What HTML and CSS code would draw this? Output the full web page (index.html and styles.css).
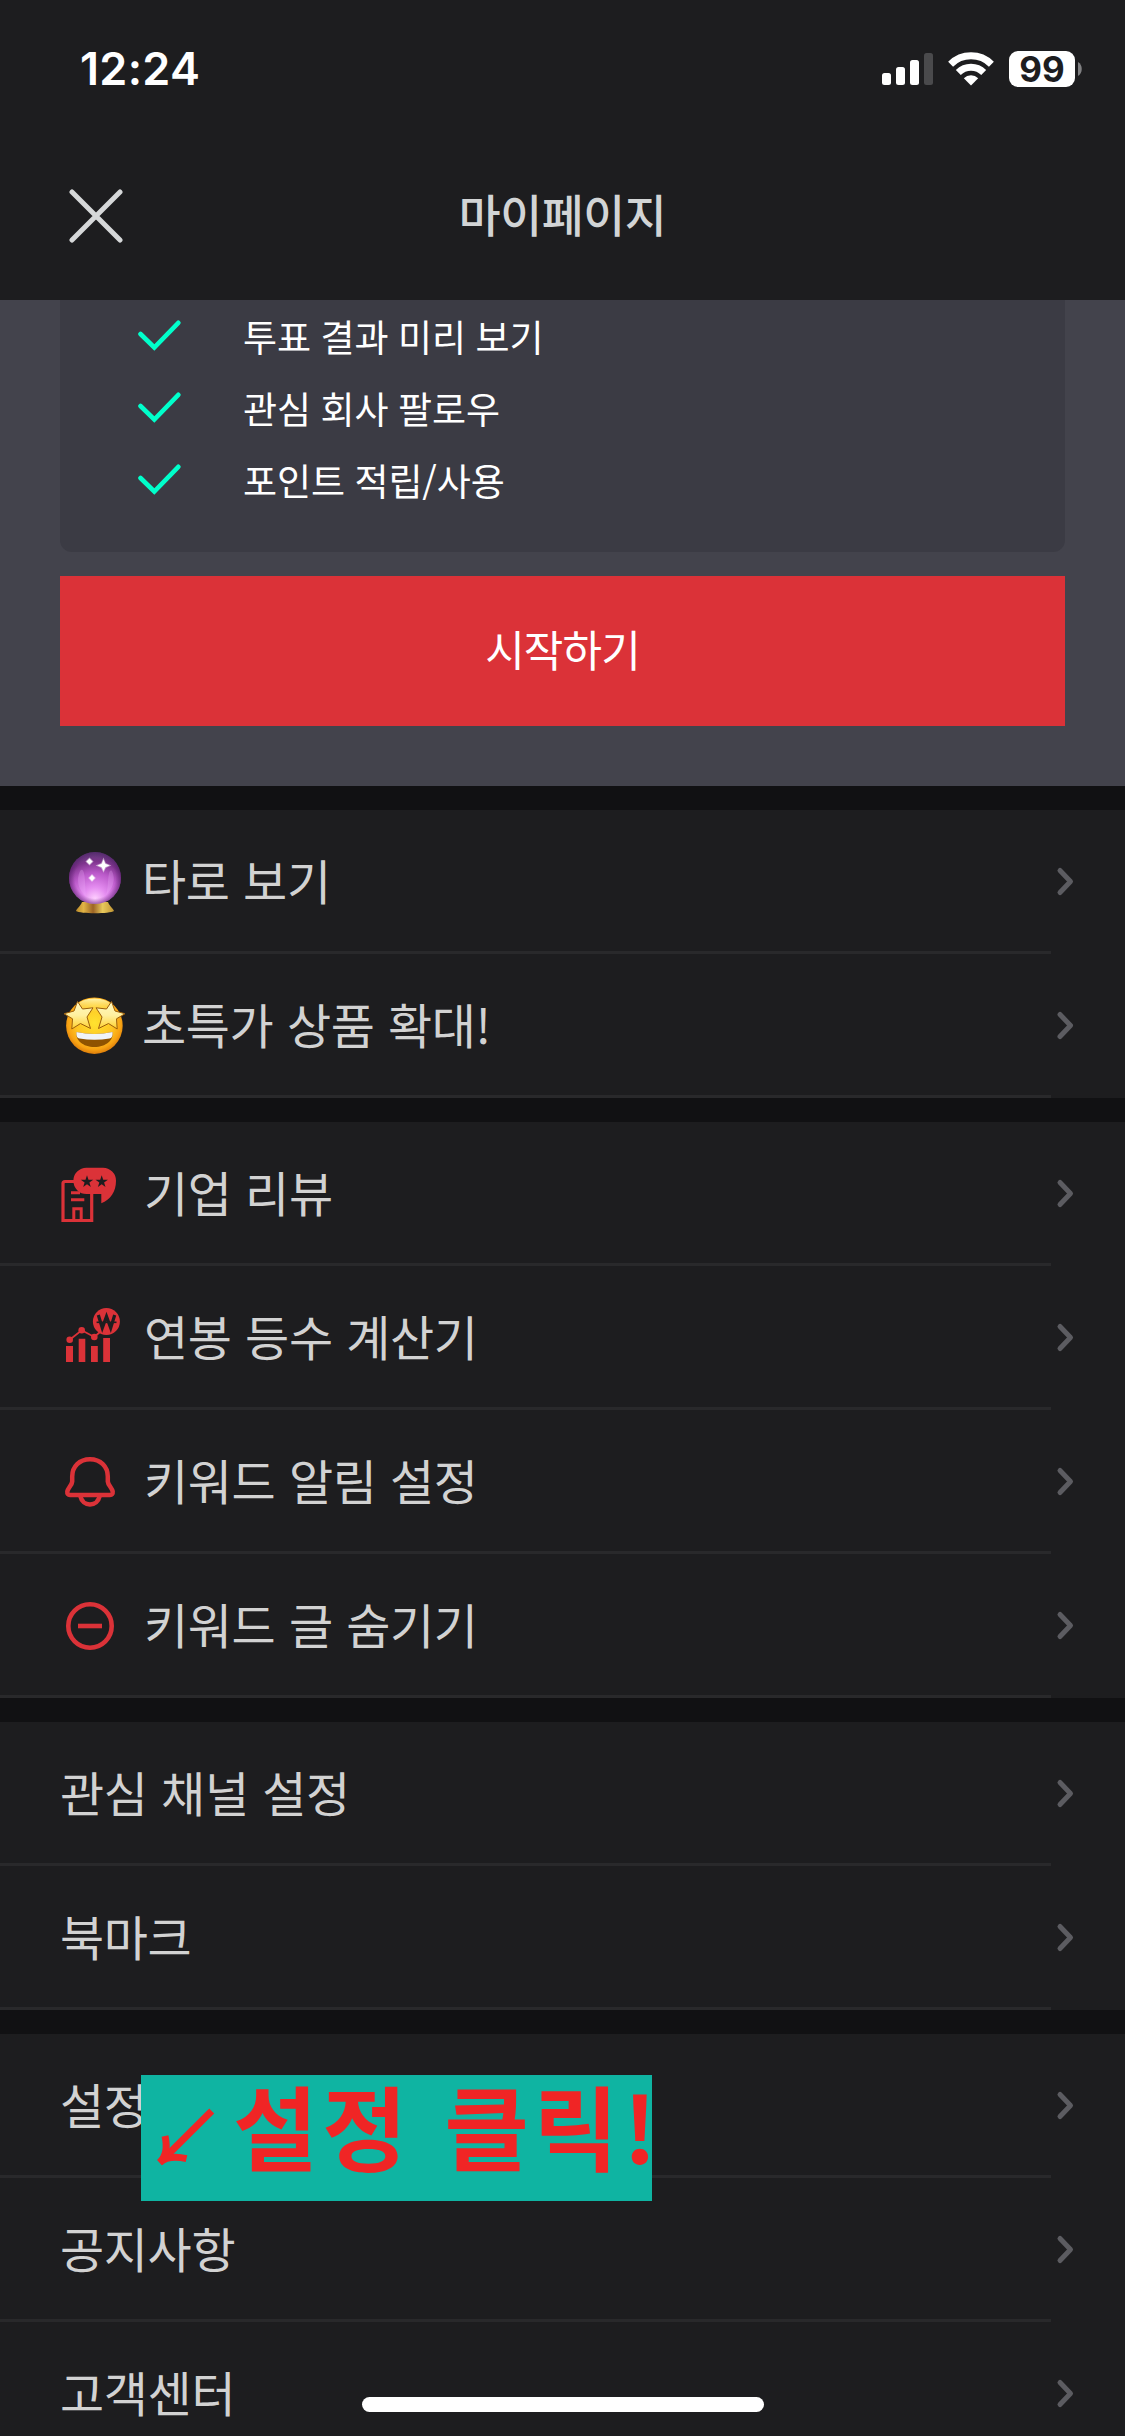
FILE: index.html
```html
<!DOCTYPE html>
<html lang="ko">
<head>
<meta charset="utf-8">
<title>마이페이지</title>
<link rel="stylesheet" href="styles.css">
</head>
<body>
<svg class="defs" width="0" height="0" aria-hidden="true">
  <defs>
    <symbol id="chevron" viewBox="0 0 20 32"><path d="M4 4.500 14.500 15.500 4 26.500" fill="none" stroke="#5c5c61" stroke-width="5" stroke-linecap="round" stroke-linejoin="round"/></symbol>
    <symbol id="check" viewBox="0 0 44 32"><path d="M2.500 14 16.300 27.500 40.300 2.800" fill="none" stroke="#00ffcb" stroke-width="4.600" stroke-linecap="round"/></symbol>
  </defs>
</svg>
<div class="screen">
  <header class="top">
    <div class="status">
      <span class="time">12:24</span>
      <div class="indicators">
        <svg class="signal" viewBox="0 0 51 32"><g fill="#fff"><rect y="20" width="9" height="12" rx="2.500"/><rect x="14" y="14" width="9" height="18" rx="2.500"/><rect x="28" y="7" width="9" height="25" rx="2.500"/></g><rect x="42" width="9" height="32" rx="2.500" fill="#4a4a4c"/></svg>
        <svg class="wifi" viewBox="0 0 46 34"><g fill="none" stroke="#fff" stroke-width="7"><path d="M2.600 12.200A29 29 0 0 1 43.400 12.200"/><path d="M10.300 20.400A18 18 0 0 1 35.700 20.400"/></g><path d="M23 33.500 15.800 26.200A10.400 10.400 0 0 1 30.200 26.200Z" fill="#fff"/></svg>
        <div class="battery"><span>99</span></div>
        <svg class="nub" viewBox="0 0 4 14"><path d="M0 0C5 2.500 5 11.500 0 14Z" fill="#808082"/></svg>
      </div>
    </div>
    <div class="nav">
      <svg class="close" viewBox="0 0 54 54"><path d="M3 3 51 51M51 3 3 51" stroke="#d6d8d9" stroke-width="5" stroke-linecap="round"/></svg>
      <h1>마이페이지</h1>
    </div>
  </header>

  <section class="promo">
    <ul class="benefits">
      <li><svg class="check"><use href="#check"/></svg><span>투표 결과 미리 보기</span></li>
      <li><svg class="check"><use href="#check"/></svg><span>관심 회사 팔로우</span></li>
      <li><svg class="check"><use href="#check"/></svg><span>포인트 적립/사용</span></li>
    </ul>
    <button class="start">시작하기</button>
  </section>

  <section class="group">
    <div class="row emoji">
      <svg class="icon" viewBox="0 0 84 84">
        <defs>
          <radialGradient id="ball" cx=".5" cy=".9" r=".9"><stop offset="0" stop-color="#ffd0ff"/><stop offset=".25" stop-color="#e48cf0"/><stop offset=".55" stop-color="#bb5aca"/><stop offset=".8" stop-color="#7d338c"/><stop offset="1" stop-color="#5f407a"/></radialGradient>
          <linearGradient id="base"><stop offset="0" stop-color="#b98a2a"/><stop offset=".2" stop-color="#e2b445"/><stop offset=".45" stop-color="#9c6424"/><stop offset=".7" stop-color="#e8c95c"/><stop offset="1" stop-color="#c09433"/></linearGradient>
          <radialGradient id="ballEdge"><stop offset=".78" stop-color="#4b1460" stop-opacity="0"/><stop offset="1" stop-color="#4b1460" stop-opacity=".5"/></radialGradient>
        </defs>
        <path d="M22 62H48C50 67 53 68 54 71C50 74 20 74 16 71C17 68 20 67 22 62Z" fill="url(#base)"/>
        <circle cx="35" cy="38" r="26" fill="url(#ball)"/>
        <circle cx="35" cy="38" r="26" fill="url(#ballEdge)"/>
        <path d="M20 31C26 24 25 51 26 56C18 51 16 39 20 31ZM52 31C47 27 49 50 46 55C53 49 56 39 52 31Z" fill="#f2b8ff" opacity=".25"/>
        <path d="M43.500 19.500 45.300 23.700 49.500 25.500 45.300 27.300 43.500 31 41.700 27.300 37.500 25.500 41.700 23.700ZM29.500 18.500 32.500 21.500 29.500 24.500 26.500 21.500ZM32 35 34.800 38 32 41 29.200 38Z" fill="#fff" stroke="#fff" stroke-opacity=".5" stroke-width="1.500"/>
      </svg>
      <span class="label">타로 보기</span><svg class="chevron"><use href="#chevron"/></svg>
    </div>
    <div class="row emoji">
      <svg class="icon" viewBox="0 0 84 84">
        <defs>
          <radialGradient id="face" cx=".5" cy=".45" r=".55"><stop offset="0" stop-color="#ffe22f"/><stop offset=".6" stop-color="#fec423"/><stop offset=".85" stop-color="#f8a313"/><stop offset="1" stop-color="#dd7d0b"/></radialGradient>
          <linearGradient id="star" x2="0" y2="1"><stop offset="0" stop-color="#fff9c2"/><stop offset=".5" stop-color="#fff0a0"/><stop offset="1" stop-color="#ffd02c"/></linearGradient>
          <linearGradient id="shine" x2="0" y2="1"><stop offset="0" stop-color="#fff6ae"/><stop offset="1" stop-color="#ffe052" stop-opacity=".2"/></linearGradient>
        </defs>
        <circle cx="34.400" cy="41.700" r="28.300" fill="url(#face)"/>
        <ellipse cx="34.400" cy="21" rx="16" ry="6.500" fill="url(#shine)"/>
        <path d="M16.500 48Q34.500 52 52.500 48C54 56 46 63 34.500 63S15 56 16.500 48Z" fill="#8f5300"/>
        <path d="M16.500 48Q34.500 52 52.500 48C53 52.500 51.500 54 49.500 54.500Q34.500 57 19.500 54.500C17.500 54 16 52.500 16.500 48Z" fill="#f0f4f8"/>
        <g fill="url(#star)" stroke="#9c5e0c" stroke-width="1" stroke-linejoin="round">
          <path d="M17.500 17.500 22.500 25 33 23.800 27 33 30.500 44.500 20.500 39.500 11.800 45 12.500 34.800 4 29.700 14 27Z"/>
          <path d="M51.500 17.500 46.500 25 36 23.800 42 33 38.500 44.500 48.500 39.500 57.200 45 56.500 34.800 65 29.700 55 27Z"/>
        </g>
      </svg>
      <span class="label">초특가 상품 확대!</span><svg class="chevron"><use href="#chevron"/></svg>
    </div>
  </section>

  <section class="group">
    <div class="row">
      <svg class="icon" viewBox="0 0 84 84">
        <path d="M15 29.500H5Q3 29.500 3 31.500V68.500H31.700V40" fill="none" stroke="#db3238" stroke-width="3.200"/>
        <path d="M11 40.700H20M11 47.700H24.300M13.800 68V56.700H21.200V68" fill="none" stroke="#db3238" stroke-width="3"/>
        <path d="M26.500 15.700H43A13 13 0 0 1 56 28.700C56 40 50.500 47.500 41.300 51.200V42H26.500A13.100 13.100 0 0 1 26.500 15.700Z" fill="#db3238"/>
        <g fill="#1d1d1f"><path id="s" d="M27 23.200 28.500 27.700H33.200L29.400 30.500 30.800 35 27 32.300 23.200 35 24.600 30.500 20.800 27.700H25.500Z"/><use href="#s" x="14.700"/></g>
      </svg>
      <span class="label">기업 리뷰</span><svg class="chevron"><use href="#chevron"/></svg>
    </div>
    <div class="row">
      <svg class="icon" viewBox="0 0 84 84">
        <g fill="#db3238"><path d="M6 50H13V66H6ZM18.700 42.700H25.300V66H18.700ZM31 50H37.800V66H31ZM43.200 42H50V66H43.200Z"/><circle cx="9.700" cy="43.700" r="3.300"/><circle cx="21.700" cy="34.200" r="3.300"/><circle cx="34.300" cy="41" r="3.300"/><circle cx="46.400" cy="25.500" r="13.500"/></g>
        <path d="M9.700 43.700 21.700 34.200 34.300 41 40 36" fill="none" stroke="#db3238" stroke-width="1.800"/>
        <path d="M38.300 19 42.300 32 46.500 20.500 50.700 32 54.700 19" fill="none" stroke="#1d1d1f" stroke-width="3.200"/><path d="M36.600 26.300H56.500" stroke="#1d1d1f" stroke-width="1.600"/>
      </svg>
      <span class="label">연봉 등수 계산기</span><svg class="chevron"><use href="#chevron"/></svg>
    </div>
    <div class="row">
      <svg class="icon" viewBox="0 0 84 84"><g fill="none" stroke="#db3238" stroke-width="4.500" stroke-linejoin="round"><path d="M30 19.200C19.500 19.200 12.200 26.500 12.200 36.500V41.500C12 45 8 48 7.300 51.500Q7 54.900 10 54.900H50Q53 54.900 52.700 51.500C52 48 48 45 47.800 41.500V36.500C47.800 26.500 40.500 19.200 30 19.200Z"/><path d="M20.300 56C21.500 61.500 25.500 64.500 30 64.500S38.500 61.500 39.700 56"/></g></svg>
      <span class="label">키워드 알림 설정</span><svg class="chevron"><use href="#chevron"/></svg>
    </div>
    <div class="row">
      <svg class="icon" viewBox="0 0 84 84"><g fill="none" stroke="#db3238" stroke-width="4.600"><circle cx="30" cy="42" r="21.700"/><path d="M18 42H42"/></g></svg>
      <span class="label">키워드 글 숨기기</span><svg class="chevron"><use href="#chevron"/></svg>
    </div>
  </section>

  <section class="group">
    <div class="row"><span class="label">관심 채널 설정</span><svg class="chevron"><use href="#chevron"/></svg></div>
    <div class="row"><span class="label">북마크</span><svg class="chevron"><use href="#chevron"/></svg></div>
  </section>

  <section class="group last">
    <div class="row"><span class="label">설정</span><svg class="chevron"><use href="#chevron"/></svg></div>
    <div class="row"><span class="label">공지사항</span><svg class="chevron"><use href="#chevron"/></svg></div>
    <div class="row"><span class="label">고객센터</span><svg class="chevron"><use href="#chevron"/></svg></div>
    <div class="callout">
      <svg class="arrow" viewBox="0 0 90 126"><g fill="none" stroke="#f02525" stroke-width="7"><path d="M70.700 36 19 87.500"/><path d="M24 61Q28 79 18.500 87.500Q28 79.500 45.500 83.700"/></g></svg>
      <span>설정 클릭!</span>
    </div>
  </section>
  <div class="home"></div>
</div>
</body>
</html>
```
FILE: styles.css
```css
* { box-sizing: border-box; }

body {
  margin: 0;
  background: #1d1d1f;
  font-family: "Noto Sans CJK KR", sans-serif;
}

.defs { position: absolute; }
svg { display: block; flex: none; }

.screen {
  position: relative;
  width: 1125px;
  height: 2436px;
  overflow: hidden;
  background: #1d1d1f;
  color: #d2d2d2;
}

.top { height: 300px; }

.status {
  display: flex;
  justify-content: space-between;
  align-items: center;
  height: 138px;
  padding: 0 43px 0 80px;
  color: #fff;
  font-family: Inter, sans-serif;
}

.time { font-size: 45px; font-weight: 600; line-height: 54px; letter-spacing: 0.3px; }

.indicators { display: flex; align-items: center; }
.signal { width: 51px; height: 32px; margin-right: 15px; }
.wifi { width: 46px; height: 34px; margin-right: 15px; }

.battery {
  display: flex;
  align-items: center;
  justify-content: center;
  width: 66px;
  height: 36px;
  border-radius: 9px;
  background: #fff;
  color: #1d1d1f;
  font-size: 35px;
  font-weight: 650;
  line-height: 36px;
}

.nub { width: 4px; height: 14px; margin-left: 3px; }

.nav {
  display: grid;
  grid-template-columns: 1fr auto 1fr;
  align-items: center;
  height: 156px;
  padding: 0 69px;
}

.close { width: 54px; height: 54px; }

h1 {
  margin: 0;
  padding-bottom: 6px;
  color: #d2d4d5;
  font-size: 45.500px;
  font-weight: 500;
  line-height: 60px;
  letter-spacing: -0.4px;
}

.promo {
  height: 486px;
  padding: 0 60px;
  background: #43434c;
}

.benefits {
  height: 252px;
  margin: 0 0 24px;
  padding: 0 0 0 78px;
  list-style: none;
  border-radius: 0 0 12px 12px;
  background: #3b3b44;
  color: #fff;
  font-size: 37px;
  letter-spacing: -0.1px;
  word-spacing: -0.6px;
}

.benefits li { display: flex; align-items: center; height: 72px; }
.check { width: 44px; height: 32px; margin-right: 61px; }

.start {
  display: block;
  width: 100%;
  height: 150px;
  padding: 0 0 6px;
  border: 0;
  background: #db3238;
  color: #fff;
  font: 400 43px "Noto Sans CJK KR", sans-serif;
  letter-spacing: -0.9px;
}

.group { border-top: 24px solid #111113; }

.row {
  display: flex;
  align-items: center;
  height: 144px;
  padding: 0 49px 0 60px;
  background: linear-gradient(#29292b, #29292b) 0 100% / 1051px 3px no-repeat;
}

.icon { width: 84px; height: 84px; }
.emoji .icon { margin-right: -2px; }

.label {
  flex: 1;
  padding-bottom: 6px;
  font-size: 48px;
  line-height: 72px;
  letter-spacing: -0.36px;
  word-spacing: 0.4px;
  white-space: nowrap;
}

.chevron { width: 20px; height: 32px; }

.last { position: relative; }

.callout {
  position: absolute;
  left: 141px;
  top: 41px;
  display: flex;
  width: 511px;
  height: 126px;
  background: #0fb4a2;
  color: #f02525;
  font-size: 92px;
  font-weight: 700;
  line-height: 97px;
  letter-spacing: 4.700px;
  word-spacing: 2px;
  white-space: nowrap;
}

.arrow { width: 90px; height: 126px; margin-right: 2px; }

.home {
  position: absolute;
  left: 362px;
  top: 2397px;
  width: 402px;
  height: 15px;
  border-radius: 8px;
  background: #fff;
}
```
